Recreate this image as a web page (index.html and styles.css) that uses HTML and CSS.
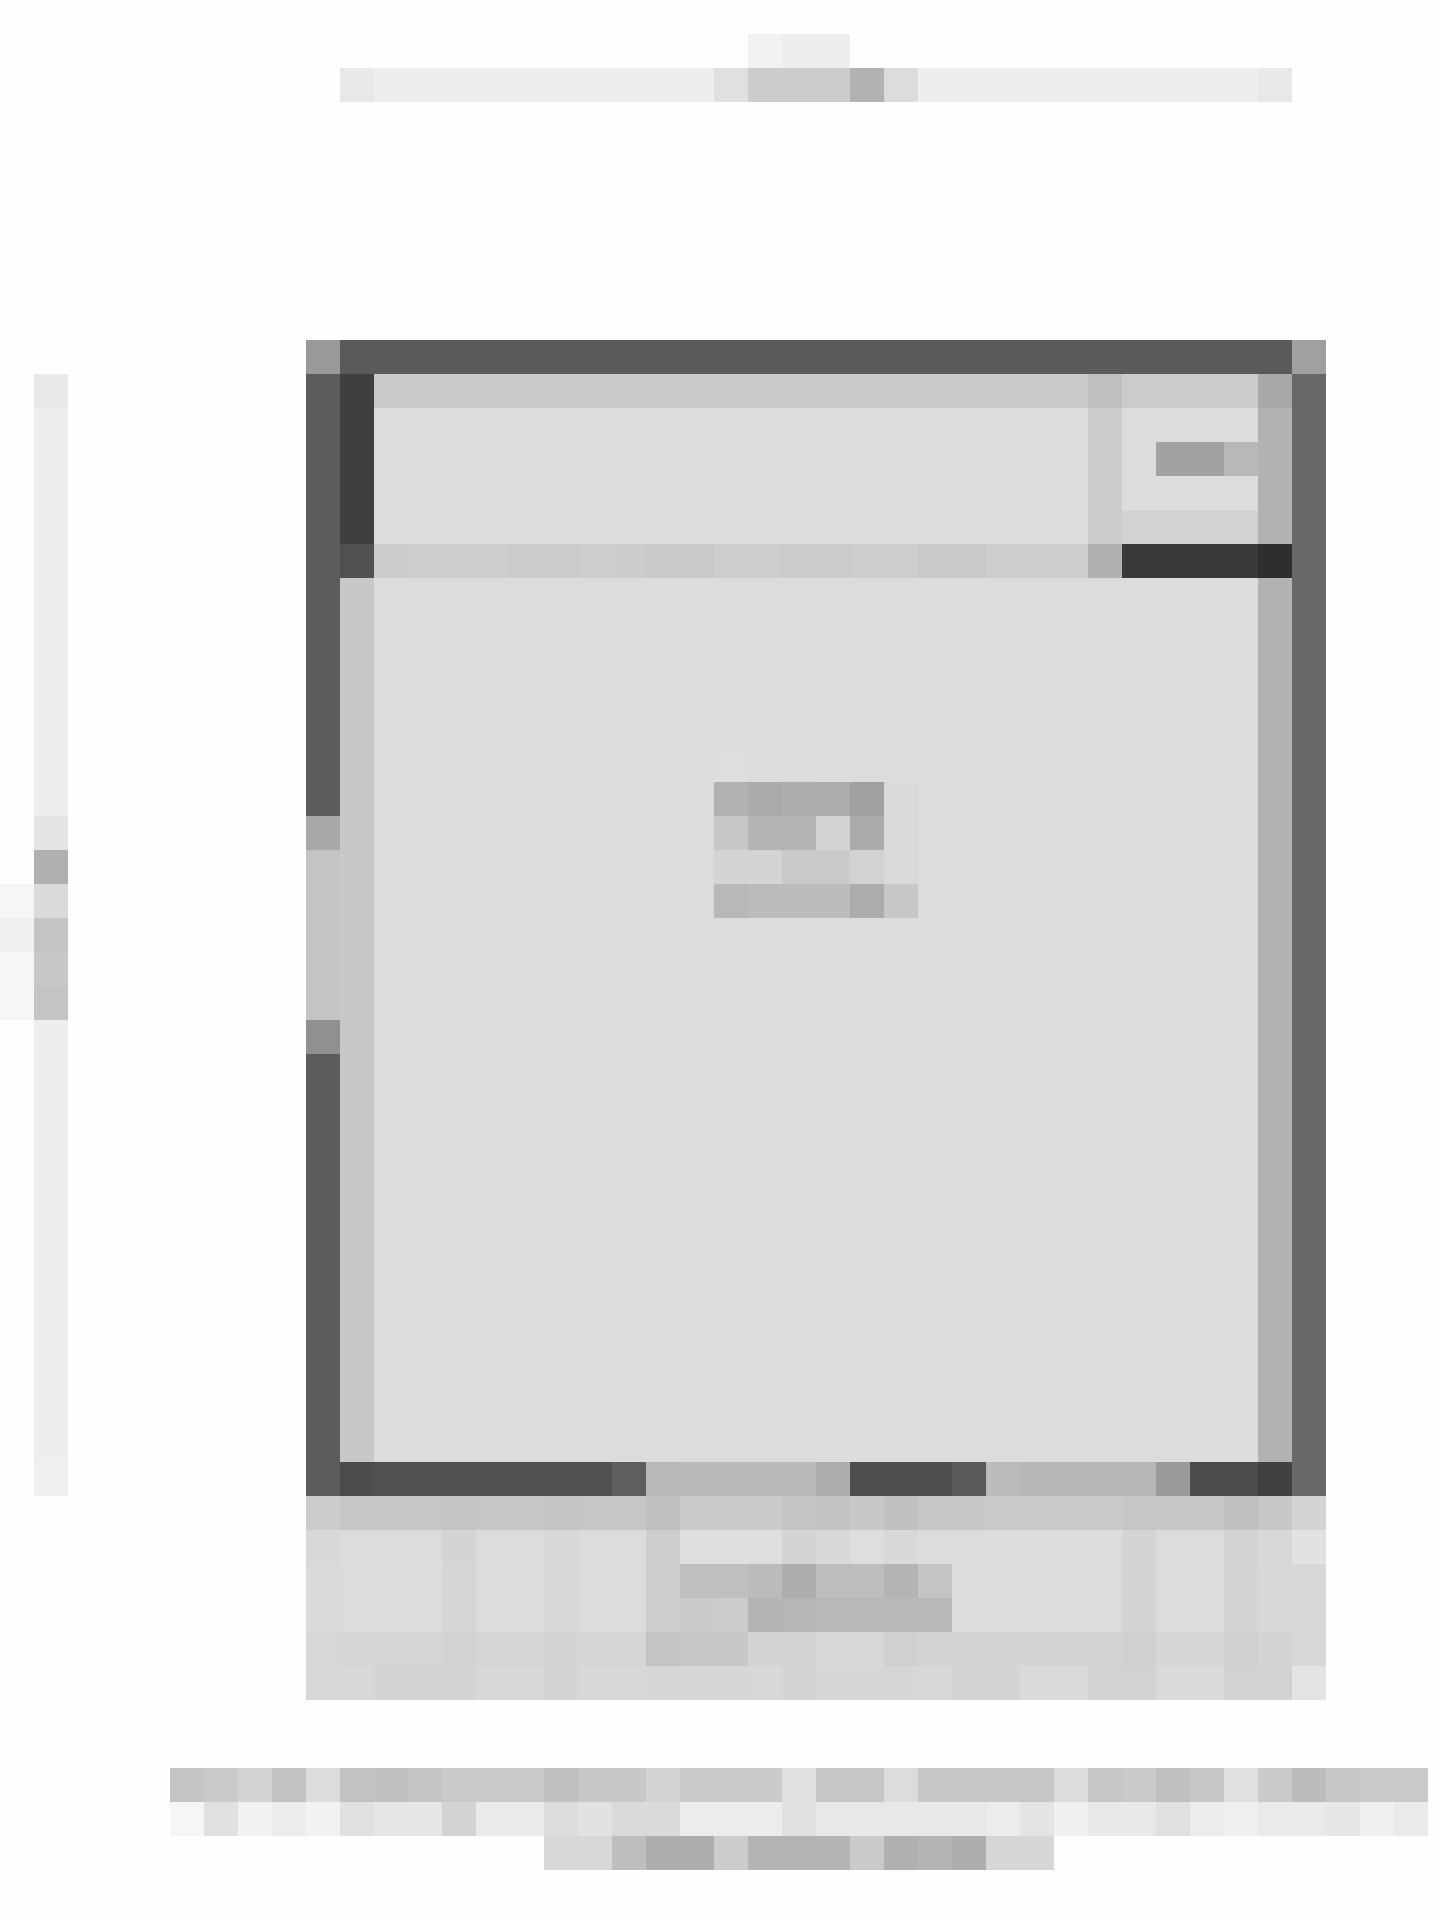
FILE: index.html
```html
<!DOCTYPE html>
<html lang="en">
<head>
    <meta charset="UTF-8">
    <title>Page</title>
    <link rel="stylesheet" href="styles.css">
</head>
<body>
    <header class="title">
        <div class="row title-top"><span class="t-f2"></span><span class="w2 t-ee"></span></div>
        <div class="row title-line"><span class="t-e8"></span><span class="w10 t-ee"></span><span class="t-e0"></span><span class="w3 t-cc"></span><span class="t-b2"></span><span class="t-dc"></span><span class="w10 t-ee"></span><span class="t-e8"></span></div>
    </header>

    <main class="workspace">
        <aside class="side">
            <div class="row"><span class="t-e8"></span></div>
            <div class="row h12"><span class="t-ee"></span></div>
            <div class="row"><span class="t-e4"></span></div>
            <div class="row"><span class="t-b0"></span></div>
            <div class="row"><span class="t-f6"></span><span class="t-da"></span></div>
            <div class="row"><span class="t-f0"></span><span class="t-c4"></span></div>
            <div class="row"><span class="t-f6"></span><span class="t-c8"></span></div>
            <div class="row"><span class="t-f6"></span><span class="t-c4"></span></div>
            <div class="row h13"><span class="t-ee"></span></div>
            <div class="row"><span class="t-f0"></span></div>
        </aside>

        <section class="card">
            <div class="row"><span class="t-99"></span><span class="w28 t-5a"></span><span class="t-a0"></span></div>

            <div class="row"><span class="t-5c"></span><span class="t-3e"></span><span class="w21 t-c9"></span><span class="t-bf"></span><span class="w4 t-cb"></span><span class="t-a8"></span><span class="t-68"></span></div>
            <div class="row"><span class="t-5c"></span><span class="t-3e"></span><span class="w21 t-dc"></span><span class="t-cc"></span><span class="w4 t-dc"></span><span class="t-b2"></span><span class="t-68"></span></div>
            <div class="row"><span class="t-5c"></span><span class="t-3e"></span><span class="w21 t-dc"></span><span class="t-cc"></span><span class="t-dc"></span><span class="w2 t-a2"></span><span class="t-b8"></span><span class="t-b2"></span><span class="t-68"></span></div>
            <div class="row"><span class="t-5c"></span><span class="t-3e"></span><span class="w21 t-dc"></span><span class="t-cc"></span><span class="w4 t-dc"></span><span class="t-b2"></span><span class="t-68"></span></div>
            <div class="row"><span class="t-5c"></span><span class="t-3e"></span><span class="w21 t-dc"></span><span class="t-cc"></span><span class="w4 t-d2"></span><span class="t-b2"></span><span class="t-68"></span></div>
            <div class="row"><span class="t-5c"></span><span class="t-50"></span><span class="t-cb"></span><span class="w3 t-ce"></span><span class="w2 t-cb"></span><span class="t-ce"></span><span class="t-cd"></span><span class="w2 t-ca"></span><span class="w2 t-ce"></span><span class="w2 t-cb"></span><span class="w2 t-ce"></span><span class="w2 t-ca"></span><span class="w3 t-ce"></span><span class="t-b0"></span><span class="w4 t-3a"></span><span class="t-2e"></span><span class="t-68"></span></div>

            <div class="row h5"><span class="t-5c"></span><span class="t-c8"></span><span class="w26 t-dc"></span><span class="t-b2"></span><span class="t-68"></span></div>
            <div class="row"><span class="t-5c"></span><span class="t-c8"></span><span class="w10 t-dc"></span><span class="t-de"></span><span class="w4 t-dc"></span><span class="w11 t-dc"></span><span class="t-b2"></span><span class="t-68"></span></div>
            <div class="row"><span class="t-5c"></span><span class="t-c8"></span><span class="w10 t-dc"></span><span class="t-b2"></span><span class="t-aa"></span><span class="t-ae"></span><span class="t-ac"></span><span class="t-a0"></span><span class="t-da"></span><span class="w10 t-dc"></span><span class="t-b2"></span><span class="t-68"></span></div>
            <div class="row"><span class="t-a8"></span><span class="t-c8"></span><span class="w10 t-dc"></span><span class="t-c8"></span><span class="w2 t-b4"></span><span class="t-d4"></span><span class="t-ab"></span><span class="t-da"></span><span class="w10 t-dc"></span><span class="t-b2"></span><span class="t-68"></span></div>
            <div class="row"><span class="t-c4"></span><span class="t-c8"></span><span class="w10 t-dc"></span><span class="w2 t-d4"></span><span class="w2 t-ca"></span><span class="t-d2"></span><span class="t-da"></span><span class="w10 t-dc"></span><span class="t-b2"></span><span class="t-68"></span></div>
            <div class="row"><span class="t-c4"></span><span class="t-c8"></span><span class="w10 t-dc"></span><span class="t-b8"></span><span class="w3 t-bc"></span><span class="t-ac"></span><span class="t-c8"></span><span class="w10 t-dc"></span><span class="t-b2"></span><span class="t-68"></span></div>
            <div class="row h3"><span class="t-c4"></span><span class="t-c8"></span><span class="w26 t-dc"></span><span class="t-b2"></span><span class="t-68"></span></div>
            <div class="row"><span class="t-90"></span><span class="t-c8"></span><span class="w26 t-dc"></span><span class="t-b2"></span><span class="t-68"></span></div>
            <div class="row h12"><span class="t-5c"></span><span class="t-c8"></span><span class="w26 t-dc"></span><span class="t-b2"></span><span class="t-68"></span></div>

            <div class="row"><span class="t-5c"></span><span class="t-4c"></span><span class="w7 t-50"></span><span class="t-5e"></span><span class="t-b8"></span><span class="w4 t-ba"></span><span class="t-ad"></span><span class="w3 t-4e"></span><span class="t-5a"></span><span class="t-bc"></span><span class="w4 t-b6"></span><span class="t-9a"></span><span class="w2 t-4c"></span><span class="t-40"></span><span class="t-68"></span></div>

            <div class="row"><span class="t-cc"></span><span class="w3 t-c6"></span><span class="t-c4"></span><span class="w2 t-c6"></span><span class="t-c4"></span><span class="w2 t-c6"></span><span class="t-c0"></span><span class="w3 t-ca"></span><span class="t-c4"></span><span class="t-c2"></span><span class="t-c8"></span><span class="t-c0"></span><span class="w2 t-c8"></span><span class="w4 t-ca"></span><span class="t-c6"></span><span class="w2 t-c8"></span><span class="t-c0"></span><span class="t-c8"></span><span class="t-d4"></span></div>
            <div class="row"><span class="t-d8"></span><span class="w3 t-dc"></span><span class="t-d4"></span><span class="w2 t-dc"></span><span class="t-d8"></span><span class="w2 t-dc"></span><span class="t-ce"></span><span class="w3 t-de"></span><span class="t-d4"></span><span class="t-d8"></span><span class="t-de"></span><span class="t-d8"></span><span class="w6 t-dc"></span><span class="t-d4"></span><span class="w2 t-dc"></span><span class="t-d2"></span><span class="t-d8"></span><span class="t-e2"></span></div>
            <div class="row"><span class="t-da"></span><span class="w3 t-dc"></span><span class="t-d6"></span><span class="w2 t-dc"></span><span class="t-d8"></span><span class="w2 t-dc"></span><span class="t-ce"></span><span class="w2 t-bf"></span><span class="t-bb"></span><span class="t-ae"></span><span class="w2 t-be"></span><span class="t-b4"></span><span class="t-c4"></span><span class="w5 t-dc"></span><span class="t-d4"></span><span class="w2 t-dc"></span><span class="t-d4"></span><span class="w2 t-d8"></span></div>
            <div class="row"><span class="t-da"></span><span class="w3 t-dc"></span><span class="t-d6"></span><span class="w2 t-dc"></span><span class="t-d8"></span><span class="w2 t-dc"></span><span class="t-ce"></span><span class="t-ca"></span><span class="t-cc"></span><span class="t-b4"></span><span class="t-b6"></span><span class="w4 t-b8"></span><span class="w5 t-dc"></span><span class="t-d4"></span><span class="w2 t-dc"></span><span class="t-d4"></span><span class="w2 t-d8"></span></div>
            <div class="row"><span class="t-d8"></span><span class="w3 t-d6"></span><span class="t-d2"></span><span class="w2 t-d6"></span><span class="t-d4"></span><span class="w2 t-d6"></span><span class="t-c4"></span><span class="w2 t-c8"></span><span class="t-d4"></span><span class="t-d2"></span><span class="w2 t-d8"></span><span class="t-d0"></span><span class="w6 t-d4"></span><span class="t-d0"></span><span class="w2 t-d6"></span><span class="t-d0"></span><span class="t-d4"></span><span class="t-d8"></span></div>
            <div class="row"><span class="w2 t-d8"></span><span class="w3 t-d4"></span><span class="w2 t-d8"></span><span class="t-d4"></span><span class="w2 t-d8"></span><span class="w3 t-d6"></span><span class="t-d8"></span><span class="t-d4"></span><span class="w3 t-d6"></span><span class="t-d8"></span><span class="w2 t-d4"></span><span class="w2 t-da"></span><span class="w2 t-d2"></span><span class="w2 t-da"></span><span class="w2 t-d2"></span><span class="t-e4"></span></div>
        </section>
    </main>

    <footer class="caption">
        <div class="row"><span class="t-c4"></span><span class="t-ca"></span><span class="t-d2"></span><span class="t-c2"></span><span class="t-dc"></span><span class="t-c2"></span><span class="t-c0"></span><span class="t-c4"></span><span class="w3 t-ca"></span><span class="t-c0"></span><span class="w2 t-c8"></span><span class="t-d4"></span><span class="w3 t-ca"></span><span class="t-e0"></span><span class="w2 t-c6"></span><span class="t-dc"></span><span class="w3 t-c8"></span><span class="t-c6"></span><span class="t-dc"></span><span class="t-c6"></span><span class="t-ca"></span><span class="t-c0"></span><span class="t-c8"></span><span class="t-e0"></span><span class="t-ca"></span><span class="t-bc"></span><span class="t-c6"></span><span class="w2 t-ca"></span></div>
        <div class="row"><span class="t-f6"></span><span class="t-e0"></span><span class="t-f2"></span><span class="t-ec"></span><span class="t-f2"></span><span class="t-e0"></span><span class="w2 t-e6"></span><span class="t-d4"></span><span class="w2 t-ea"></span><span class="t-dc"></span><span class="t-e2"></span><span class="w2 t-da"></span><span class="w3 t-ec"></span><span class="t-e0"></span><span class="w5 t-e8"></span><span class="t-ec"></span><span class="t-e4"></span><span class="t-f0"></span><span class="w2 t-e8"></span><span class="t-e0"></span><span class="t-ec"></span><span class="t-f0"></span><span class="w2 t-ea"></span><span class="t-e6"></span><span class="t-f0"></span><span class="t-ea"></span></div>
        <div class="row caption-end"><span class="w2 t-d8"></span><span class="t-be"></span><span class="w2 t-ae"></span><span class="t-cc"></span><span class="w3 t-b4"></span><span class="t-ca"></span><span class="t-b0"></span><span class="t-b4"></span><span class="t-ae"></span><span class="w2 t-d6"></span></div>
    </footer>
</body>
</html>
```

FILE: styles.css
```css
body {
    margin: 0;
    height: 1920px;
    background-color: #fefefe;
}

/* every block sits on a 34px square */
.row {
    display: flex;
    height: 34px;
}

.row span {
    flex: none;
    width: 34px;
}

.row.h3 { height: 102px; }
.row.h5 { height: 170px; }
.row.h12 { height: 408px; }
.row.h13 { height: 442px; }

.row .w2 { width: 68px; }
.row .w3 { width: 102px; }
.row .w4 { width: 136px; }
.row .w5 { width: 170px; }
.row .w6 { width: 204px; }
.row .w7 { width: 238px; }
.row .w10 { width: 340px; }
.row .w11 { width: 374px; }
.row .w21 { width: 714px; }
.row .w26 { width: 884px; }
.row .w28 { width: 952px; }

.title {
    padding-top: 34px;
}

.title-top {
    margin-left: 748px;
}

.title-line {
    margin-left: 340px;
}

.workspace {
    display: flex;
    margin-top: 238px;
}

.side {
    width: 68px;
    padding-top: 34px;
}

.side .row {
    justify-content: flex-end;
}

.card {
    width: 1020px;
    margin-left: 238px;
}

.caption {
    margin-top: 68px;
    padding-left: 170px;
}

.caption-end {
    margin-left: 374px;
}

.t-2e { background-color: #2e2e2e; }
.t-3a { background-color: #3a3a3a; }
.t-3e { background-color: #3e3e3e; }
.t-40 { background-color: #404040; }
.t-4c { background-color: #4c4c4c; }
.t-4e { background-color: #4e4e4e; }
.t-50 { background-color: #505050; }
.t-5a { background-color: #5a5a5a; }
.t-5c { background-color: #5c5c5c; }
.t-5e { background-color: #5e5e5e; }
.t-68 { background-color: #686868; }
.t-90 { background-color: #909090; }
.t-99 { background-color: #999999; }
.t-9a { background-color: #9a9a9a; }
.t-a0 { background-color: #a0a0a0; }
.t-a2 { background-color: #a2a2a2; }
.t-a8 { background-color: #a8a8a8; }
.t-aa { background-color: #aaaaaa; }
.t-ab { background-color: #ababab; }
.t-ac { background-color: #acacac; }
.t-ad { background-color: #adadad; }
.t-ae { background-color: #aeaeae; }
.t-b0 { background-color: #b0b0b0; }
.t-b2 { background-color: #b2b2b2; }
.t-b4 { background-color: #b4b4b4; }
.t-b6 { background-color: #b6b6b6; }
.t-b8 { background-color: #b8b8b8; }
.t-ba { background-color: #bababa; }
.t-bb { background-color: #bbbbbb; }
.t-bc { background-color: #bcbcbc; }
.t-be { background-color: #bebebe; }
.t-bf { background-color: #bfbfbf; }
.t-c0 { background-color: #c0c0c0; }
.t-c2 { background-color: #c2c2c2; }
.t-c4 { background-color: #c4c4c4; }
.t-c6 { background-color: #c6c6c6; }
.t-c8 { background-color: #c8c8c8; }
.t-c9 { background-color: #c9c9c9; }
.t-ca { background-color: #cacaca; }
.t-cb { background-color: #cbcbcb; }
.t-cc { background-color: #cccccc; }
.t-cd { background-color: #cdcdcd; }
.t-ce { background-color: #cecece; }
.t-d0 { background-color: #d0d0d0; }
.t-d2 { background-color: #d2d2d2; }
.t-d4 { background-color: #d4d4d4; }
.t-d6 { background-color: #d6d6d6; }
.t-d8 { background-color: #d8d8d8; }
.t-da { background-color: #dadada; }
.t-dc { background-color: #dcdcdc; }
.t-de { background-color: #dedede; }
.t-e0 { background-color: #e0e0e0; }
.t-e2 { background-color: #e2e2e2; }
.t-e4 { background-color: #e4e4e4; }
.t-e6 { background-color: #e6e6e6; }
.t-e8 { background-color: #e8e8e8; }
.t-ea { background-color: #eaeaea; }
.t-ec { background-color: #ececec; }
.t-ee { background-color: #eeeeee; }
.t-f0 { background-color: #f0f0f0; }
.t-f2 { background-color: #f2f2f2; }
.t-f6 { background-color: #f6f6f6; }
```
